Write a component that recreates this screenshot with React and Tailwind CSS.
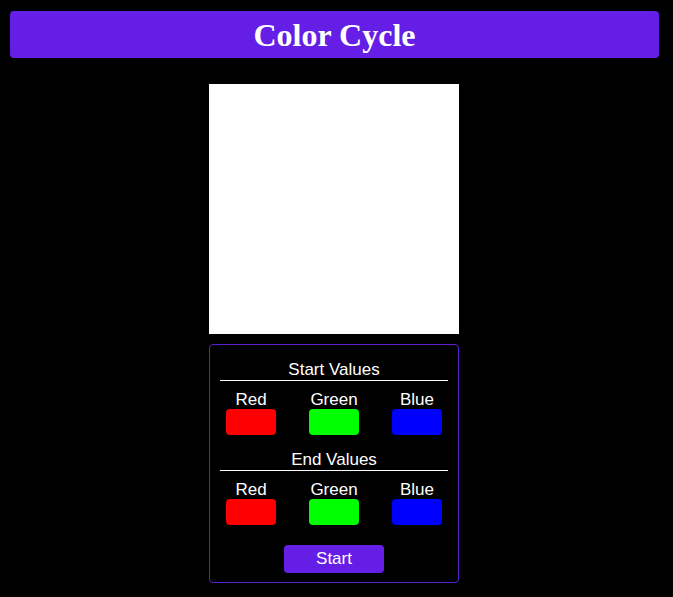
import React from "react";

const swatches = [
  { label: "Red", color: "bg-[#ff0000]" },
  { label: "Green", color: "bg-[#00ff00]" },
  { label: "Blue", color: "bg-[#0000ff]" },
];

function ValueGroup({ title }) {
  return (
    <div className="flex flex-col">
      <div className="text-center text-[17px] leading-[18px] pt-px -mb-px">{title}</div>
      <div className="h-px bg-white mt-[2px]" />
      <div className="flex justify-between px-[6px] mt-[10px]">
        {swatches.map((s) => (
          <div key={s.label} className="flex flex-col items-center w-[50px]">
            <div className="text-[17px] leading-[18px]">{s.label}</div>
            <div className={`w-[50px] h-[26px] rounded-[4px] ${s.color}`} />
          </div>
        ))}
      </div>
    </div>
  );
}

export default function App() {
  return (
    <div
      className="min-h-[597px] bg-black text-white pt-[11px] pl-[10px] pr-[14px]"
      style={{ fontFamily: '"Liberation Sans", Arial, sans-serif' }}
    >
      {/* Header */}
      <div className="bg-[#651ee6] rounded-[4px] h-[47px] flex items-center justify-center">
        <h1
          className="text-[32px] font-bold leading-none"
          style={{ fontFamily: '"Liberation Serif", "Times New Roman", serif' }}
        >
          Color Cycle
        </h1>
      </div>

      <div className="flex flex-col items-center mt-[26px] pr-px">
        {/* Color display */}
        <div className="w-[250px] h-[250px] bg-white" />

        {/* Controls */}
        <div className="w-[250px] mt-[10px] border border-[#5b22cc] rounded-[4px] px-[10px] pt-[15px] pb-[9px] flex flex-col">
          <ValueGroup title="Start Values" />
          <div className="mt-[15px]">
            <ValueGroup title="End Values" />
          </div>
          <div className="flex justify-center mt-[20px]">
            <button className="w-[100px] h-[28px] bg-[#651ee6] rounded-[4px] text-[17px] text-white">
              Start
            </button>
          </div>
        </div>
      </div>
    </div>
  );
}
